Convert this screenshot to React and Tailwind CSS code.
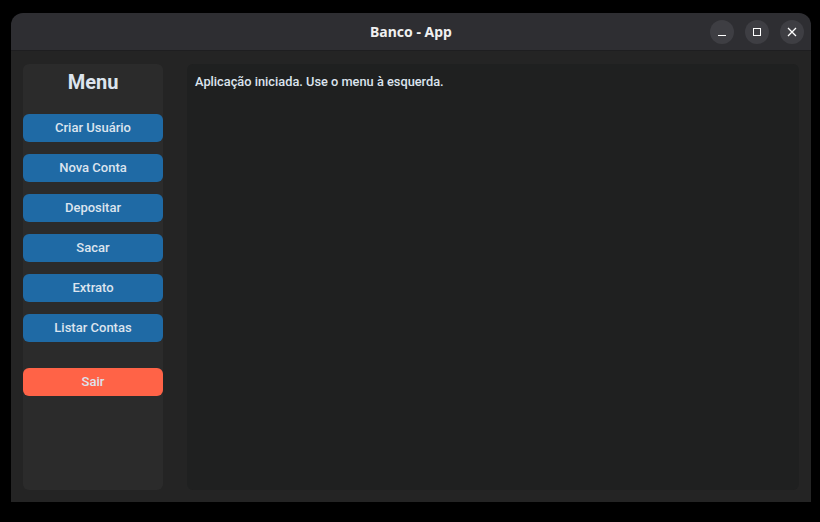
import React from 'react';

const menuButtons = ['Criar Usuário', 'Nova Conta', 'Depositar', 'Sacar', 'Extrato', 'Listar Contas'];

const WinButton = ({ children }) => (
  <div className="w-6 h-6 rounded-full bg-[#3e3e43] flex items-center justify-center text-white">
    {children}
  </div>
);

export default function App() {
  return (
    <div className="w-[820px] h-[522px] bg-black pt-[13px] pl-[11px]" style={{ fontFamily: 'Roboto, "Noto Sans", sans-serif' }}>
      <div className="w-[800px] h-[489px] flex flex-col">
        {/* barra de título */}
        <div className="h-[38px] bg-[#2e2e32] rounded-t-[12px] border-b border-[#1e1e20] flex items-center relative">
          <div className="flex-1 text-center text-[14px] font-bold text-[#f0f0f0]" style={{ fontFamily: '"Noto Sans", "Open Sans", sans-serif' }}>
            Banco - App
          </div>
          <div className="absolute right-[7px] top-[7px] flex gap-[11px]">
            <WinButton>
              <div className="w-[8px] h-[1px] bg-white mt-[6px]" />
            </WinButton>
            <WinButton>
              <div className="w-[8px] h-[8px] border border-white" />
            </WinButton>
            <WinButton>
              <svg width="10" height="10" viewBox="0 0 10 10" stroke="white" strokeWidth="1.3">
                <path d="M1 1 L9 9 M9 1 L1 9" />
              </svg>
            </WinButton>
          </div>
        </div>

        {/* corpo */}
        <div className="flex-1 bg-[#242424] flex gap-6 pt-[13px] pb-[12px] pl-[12px] pr-[12px]">
          <div className="w-[140px] bg-[#2b2b2b] rounded-[6px] flex flex-col">
            <div className="text-center text-[20px] font-bold text-[#dce4ee] mt-[6px] h-[24px] leading-[24px]">Menu</div>
            <div className="flex flex-col gap-3 mt-[20px]">
              {menuButtons.map((label) => (
                <div key={label} className="h-[28px] rounded-[6px] bg-[#1f6aa5] text-[#dce4ee] text-[13px] font-medium flex items-center justify-center">
                  {label}
                </div>
              ))}
            </div>
            <div className="mt-[26px] h-[28px] rounded-[6px] bg-[#ff6347] text-[#dce4ee] text-[13px] font-medium flex items-center justify-center">
              Sair
            </div>
          </div>
          <div className="flex-1 bg-[#1f2020] rounded-[6px] px-[8px] pt-[8px]">
            <div className="text-[12.8px] font-medium text-[#dce4ee]">Aplicação iniciada. Use o menu à esquerda.</div>
          </div>
        </div>
      </div>
    </div>
  );
}
